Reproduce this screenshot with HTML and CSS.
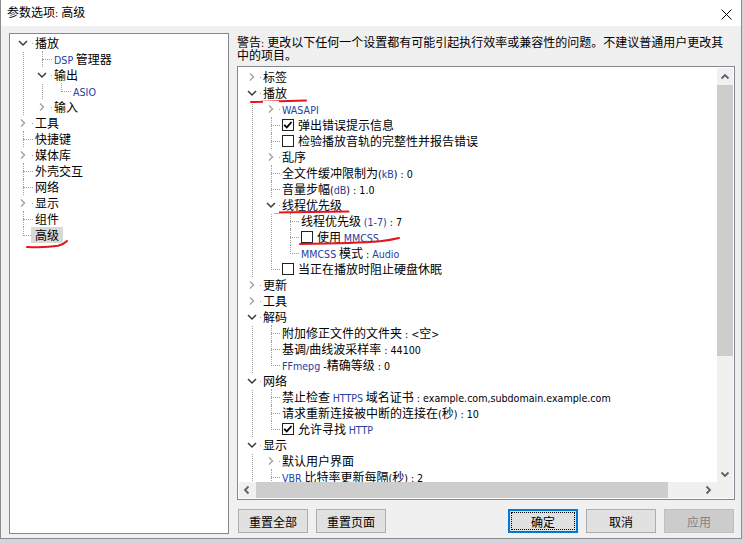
FILE: index.html
```html
<!DOCTYPE html>
<html lang="zh-CN">
<head>
<meta charset="utf-8">
<title>参数选项: 高级</title>
<link rel="stylesheet" href="styles.css">
</head>
<body>
<div class="window">
  <div class="titlebar">
    <span class="title">参数选项<span class="en">: </span>高级</span>
    <svg class="close" viewBox="0 0 11 11"><path d="M0.5 0.5L10.5 10.5M10.5 0.5L0.5 10.5"/></svg>
  </div>
  <div class="content">
    <div class="lbox">
      <ul class="tree t1">
        <li><div class="row"><svg class="tw" viewBox="0 0 16 16"><path d="M4 6l4 4 4-4"/></svg><span class="lb">播放</span></div>
          <ul>
            <li><div class="row"><span class="lb"><span class="en b">DSP</span> 管理器</span></div></li>
            <li><div class="row"><svg class="tw" viewBox="0 0 16 16"><path d="M4 6l4 4 4-4"/></svg><span class="lb">输出</span></div>
              <ul>
                <li><div class="row"><span class="lb"><span class="en b">ASIO</span></span></div></li>
              </ul>
            </li>
            <li><div class="row"><svg class="tw c" viewBox="0 0 16 16"><path d="M6 4.5l3.5 3.5L6 11.5"/></svg><span class="lb">输入</span></div></li>
          </ul>
        </li>
        <li><div class="row"><svg class="tw c" viewBox="0 0 16 16"><path d="M6 4.5l3.5 3.5L6 11.5"/></svg><span class="lb">工具</span></div></li>
        <li><div class="row"><span class="lb">快捷键</span></div></li>
        <li><div class="row"><svg class="tw c" viewBox="0 0 16 16"><path d="M6 4.5l3.5 3.5L6 11.5"/></svg><span class="lb">媒体库</span></div></li>
        <li><div class="row"><span class="lb">外壳交互</span></div></li>
        <li><div class="row"><span class="lb">网络</span></div></li>
        <li><div class="row"><svg class="tw c" viewBox="0 0 16 16"><path d="M6 4.5l3.5 3.5L6 11.5"/></svg><span class="lb">显示</span></div></li>
        <li><div class="row"><span class="lb">组件</span></div></li>
        <li><div class="row"><span class="lb sel">高级</span></div></li>
      </ul>
    </div>
    <div class="right">
      <div class="warn">警告<span class="en">: </span>更改以下任何一个设置都有可能引起执行效率或兼容性的问题。不建议普通用户更改其<br>中的项目。</div>
      <div class="tbox">
        <div class="view">
          <ul class="tree t2">
            <li><div class="row"><svg class="tw c" viewBox="0 0 16 16"><path d="M6 4.5l3.5 3.5L6 11.5"/></svg><span class="lb">标签</span></div></li>
            <li><div class="row"><svg class="tw" viewBox="0 0 16 16"><path d="M4 6l4 4 4-4"/></svg><span class="lb">播放</span></div>
              <ul>
                <li><div class="row"><svg class="tw c" viewBox="0 0 16 16"><path d="M6 4.5l3.5 3.5L6 11.5"/></svg><span class="lb"><span class="en b">WASAPI</span></span></div></li>
                <li><div class="row"><span class="cb on"><svg viewBox="0 0 12 12"><path d="M2.2 5.8L4.8 8.4 9.6 3"/></svg></span><span class="lb">弹出错误提示信息</span></div></li>
                <li><div class="row"><span class="cb"></span><span class="lb">检验播放音轨的完整性并报告错误</span></div></li>
                <li><div class="row"><svg class="tw c" viewBox="0 0 16 16"><path d="M6 4.5l3.5 3.5L6 11.5"/></svg><span class="lb">乱序</span></div></li>
                <li><div class="row"><span class="lb">全文件缓冲限制为<span class="en">(<span class="b">kB</span>) : 0</span></span></div></li>
                <li><div class="row"><span class="lb">音量步幅<span class="en">(<span class="b">dB</span>) : 1.0</span></span></div></li>
                <li><div class="row"><svg class="tw" viewBox="0 0 16 16"><path d="M4 6l4 4 4-4"/></svg><span class="lb">线程优先级</span></div>
                  <ul>
                    <li><div class="row"><span class="lb">线程优先级 <span class="en"><span class="b">(1-7)</span> : 7</span></span></div></li>
                    <li><div class="row"><span class="cb"></span><span class="lb">使用 <span class="en b">MMCSS</span></span></div></li>
                    <li><div class="row"><span class="lb"><span class="en b">MMCSS</span> 模式<span class="en"> : <span class="b">Audio</span></span></span></div></li>
                  </ul>
                </li>
                <li><div class="row"><span class="cb"></span><span class="lb">当正在播放时阻止硬盘休眠</span></div></li>
              </ul>
            </li>
            <li><div class="row"><svg class="tw c" viewBox="0 0 16 16"><path d="M6 4.5l3.5 3.5L6 11.5"/></svg><span class="lb">更新</span></div></li>
            <li><div class="row"><svg class="tw c" viewBox="0 0 16 16"><path d="M6 4.5l3.5 3.5L6 11.5"/></svg><span class="lb">工具</span></div></li>
            <li><div class="row"><svg class="tw" viewBox="0 0 16 16"><path d="M4 6l4 4 4-4"/></svg><span class="lb">解码</span></div>
              <ul>
                <li><div class="row"><span class="lb">附加修正文件的文件夹<span class="en"> : &lt;</span>空<span class="en">&gt;</span></span></div></li>
                <li><div class="row"><span class="lb">基调<span class="en">/</span>曲线波采样率<span class="en"> : 44100</span></span></div></li>
                <li><div class="row"><span class="lb"><span class="en"><span class="b">FFmepg</span> -</span>精确等级<span class="en"> : 0</span></span></div></li>
              </ul>
            </li>
            <li><div class="row"><svg class="tw" viewBox="0 0 16 16"><path d="M4 6l4 4 4-4"/></svg><span class="lb">网络</span></div>
              <ul>
                <li><div class="row"><span class="lb">禁止检查 <span class="en b">HTTPS</span> 域名证书<span class="en"> : example.com,subdomain.example.com</span></span></div></li>
                <li><div class="row"><span class="lb">请求重新连接被中断的连接在<span class="en">(</span>秒<span class="en">) : 10</span></span></div></li>
                <li><div class="row"><span class="cb on"><svg viewBox="0 0 12 12"><path d="M2.2 5.8L4.8 8.4 9.6 3"/></svg></span><span class="lb">允许寻找 <span class="en b">HTTP</span></span></div></li>
              </ul>
            </li>
            <li><div class="row"><svg class="tw" viewBox="0 0 16 16"><path d="M4 6l4 4 4-4"/></svg><span class="lb">显示</span></div>
              <ul>
                <li><div class="row"><svg class="tw c" viewBox="0 0 16 16"><path d="M6 4.5l3.5 3.5L6 11.5"/></svg><span class="lb">默认用户界面</span></div></li>
                <li><div class="row"><span class="lb"><span class="en b">VBR</span> 比特率更新每隔<span class="en">(</span>秒<span class="en">) : 2</span></span></div></li>
                <li><div class="row"><span class="lb">主窗口标题</span></div></li>
              </ul>
            </li>
            <li><div class="row"><svg class="tw c" viewBox="0 0 16 16"><path d="M6 4.5l3.5 3.5L6 11.5"/></svg><span class="lb">其他</span></div></li>
          </ul>
        </div>
        <div class="vs">
          <div class="arr"><svg viewBox="0 0 16 16"><path d="M4.5 9.5L8 6l3.5 3.5"/></svg></div>
          <div class="thumb"></div>
          <div class="fill"></div>
          <div class="arr"><svg viewBox="0 0 16 16"><path d="M4.5 6.5L8 10l3.5-3.5"/></svg></div>
        </div>
        <div class="hs">
          <div class="arr"><svg viewBox="0 0 16 16"><path d="M9.5 4.5L6 8l3.5 3.5"/></svg></div>
          <div class="thumb"></div>
          <div class="fill"></div>
          <div class="arr"><svg viewBox="0 0 16 16"><path d="M6.5 4.5L10 8l-3.5 3.5"/></svg></div>
        </div>
        <div class="corner"></div>
      </div>
      <div class="btns">
        <button class="btn">重置全部</button>
        <button class="btn">重置页面</button>
        <span class="spacer"></span>
        <button class="btn def">确定</button>
        <button class="btn">取消</button>
        <button class="btn dis">应用</button>
      </div>
    </div>
  </div>
</div>
<svg class="marks" viewBox="0 0 744 543">
  <path d="M27 247C40 247.5 52 246.8 58 245.8C62 245 65 243 67 241"/>
  <path d="M251 102C270 101.6 290 100.8 306 100.4"/>
  <path d="M275 212.6C300 212.2 325 212 348.5 211.6"/>
  <path d="M300 244C330 243.6 360 243 380 241.2C390 240.2 395 239 399 238"/>
</svg>
</body>
</html>
```
FILE: styles.css
```css
* { box-sizing: border-box; }
html, body { margin: 0; padding: 0; }
body {
  width: 744px;
  height: 543px;
  overflow: hidden;
  position: relative;
  background: #d7d3dc;
  font-family: "Noto Sans CJK SC", sans-serif;
  font-size: 12px;
  color: #000;
}
.en {
  font-family: "DejaVu Sans Condensed", "Liberation Sans", sans-serif;
  font-size: 10.6px;
}
.b { color: #2540a0; }

.window {
  width: 742px;
  height: 539px;
  background: #f0f0f0;
  border: 1px solid #8c8c8c;
  border-top: 0;
  display: flex;
  flex-direction: column;
}
.titlebar {
  flex: none;
  height: 26px;
  background: #fff;
  display: flex;
  align-items: center;
  justify-content: space-between;
  padding: 0 9px 0 6px;
}
.title { line-height: 16px; margin-top: -1px; }
.close { width: 11px; height: 11px; margin-top: 2px; }
.close path { stroke: #000; stroke-width: 1; fill: none; }

.content {
  flex: 1;
  display: flex;
  gap: 8px;
  padding: 7px 6px 4px 8px;
}
.lbox {
  width: 220px;
  height: 501px;
  border: 1px solid #828790;
  padding: 1px;
  background: #fff;
  overflow: hidden;
}
.right {
  width: 498px;
  display: flex;
  flex-direction: column;
}
.warn {
  height: 33px;
  padding-top: 3px;
  line-height: 12px;
  white-space: nowrap;
}
.tbox {
  height: 434px;
  border: 1px solid #828790;
  padding: 1px;
  background: #fff;
  display: grid;
  grid-template-columns: 478px 16px;
  grid-template-rows: 414px 16px;
}
.view { overflow: hidden; padding-top: 1px; }

/* tree */
.tree, .tree ul { list-style: none; margin: 0; padding: 0; }
.tree ul { margin-left: 19px; }
.t1 { --lx: 12px; }
.t2 { --lx: 13px; }
.tree li { position: relative; }
.tree li::before {
  content: "";
  position: absolute;
  left: var(--lx);
  top: 0;
  bottom: 0;
  border-left: 1px dotted #a0a0a0;
}
.tree li:last-child::before { bottom: auto; height: 9px; }
.row {
  position: relative;
  height: 16px;
  line-height: 16px;
  padding-left: 24px;
  white-space: nowrap;
  display: flex;
  align-items: center;
}
.row::before {
  content: "";
  position: absolute;
  left: var(--lx);
  top: 8px;
  width: calc(22px - var(--lx));
  border-top: 1px dotted #a0a0a0;
}
.tw {
  position: absolute;
  left: calc(var(--lx) - 8px);
  top: 0;
  width: 16px;
  height: 16px;
  background: #fff;
  z-index: 1;
}
.tw path { fill: none; stroke: #3c3c3c; stroke-width: 1.5; }
.tw.c path { stroke: #a6a6a6; }
.lb { position: relative; height: 16px; line-height: 16px; }
.lb.sel { background: #d9d9d9; margin-left: -4px; padding: 0 4px; }
.cb {
  position: relative;
  flex: none;
  width: 12px;
  height: 12px;
  border: 1px solid #222;
  background: #fff;
  margin-right: 4px;
}
.cb svg { position: absolute; left: -1px; top: -1px; width: 12px; height: 12px; }
.cb path { fill: none; stroke: #000; stroke-width: 1.8; }

/* scrollbars */
.vs, .hs { background: #f0f0f0; display: flex; }
.vs { flex-direction: column; }
.vs .arr { height: 17px; flex: none; }
.vs .thumb { height: 271px; background: #cdcdcd; flex: none; }
.hs .arr { width: 17px; flex: none; }
.hs .thumb { width: 412px; background: #cdcdcd; flex: none; }
.fill { flex: 1; }
.arr svg { width: 16px; height: 16px; display: block; }
.vs .arr svg { margin-top: 1px; }
.arr path { fill: none; stroke: #606060; stroke-width: 1.8; }
.corner { background: #f0f0f0; }

/* buttons */
.btns {
  display: flex;
  gap: 8px;
  margin-top: 9px;
  padding: 0 1px;
}
.spacer { flex: 1; }
.btn {
  position: relative;
  width: 70px;
  height: 24px;
  margin: 0;
  padding: 0;
  border: 1px solid #adadad;
  background: #e1e1e1;
  font-family: "Noto Sans CJK SC", sans-serif;
  font-size: 12px;
  line-height: 16px;
  color: #000;
  padding-top: 2px;
}
.btn.def { border: 2px solid #0078d7; }
.btn.def::after {
  content: "";
  position: absolute;
  inset: 1px;
  border: 1px dotted #000;
}
.btn.dis { background: #cccccc; border-color: #bfbfbf; color: #838383; }

.marks {
  position: absolute;
  left: 0;
  top: 0;
  width: 744px;
  height: 543px;
  pointer-events: none;
}
.marks path { fill: none; stroke: #e8141c; stroke-width: 2; stroke-linecap: round; }
```
